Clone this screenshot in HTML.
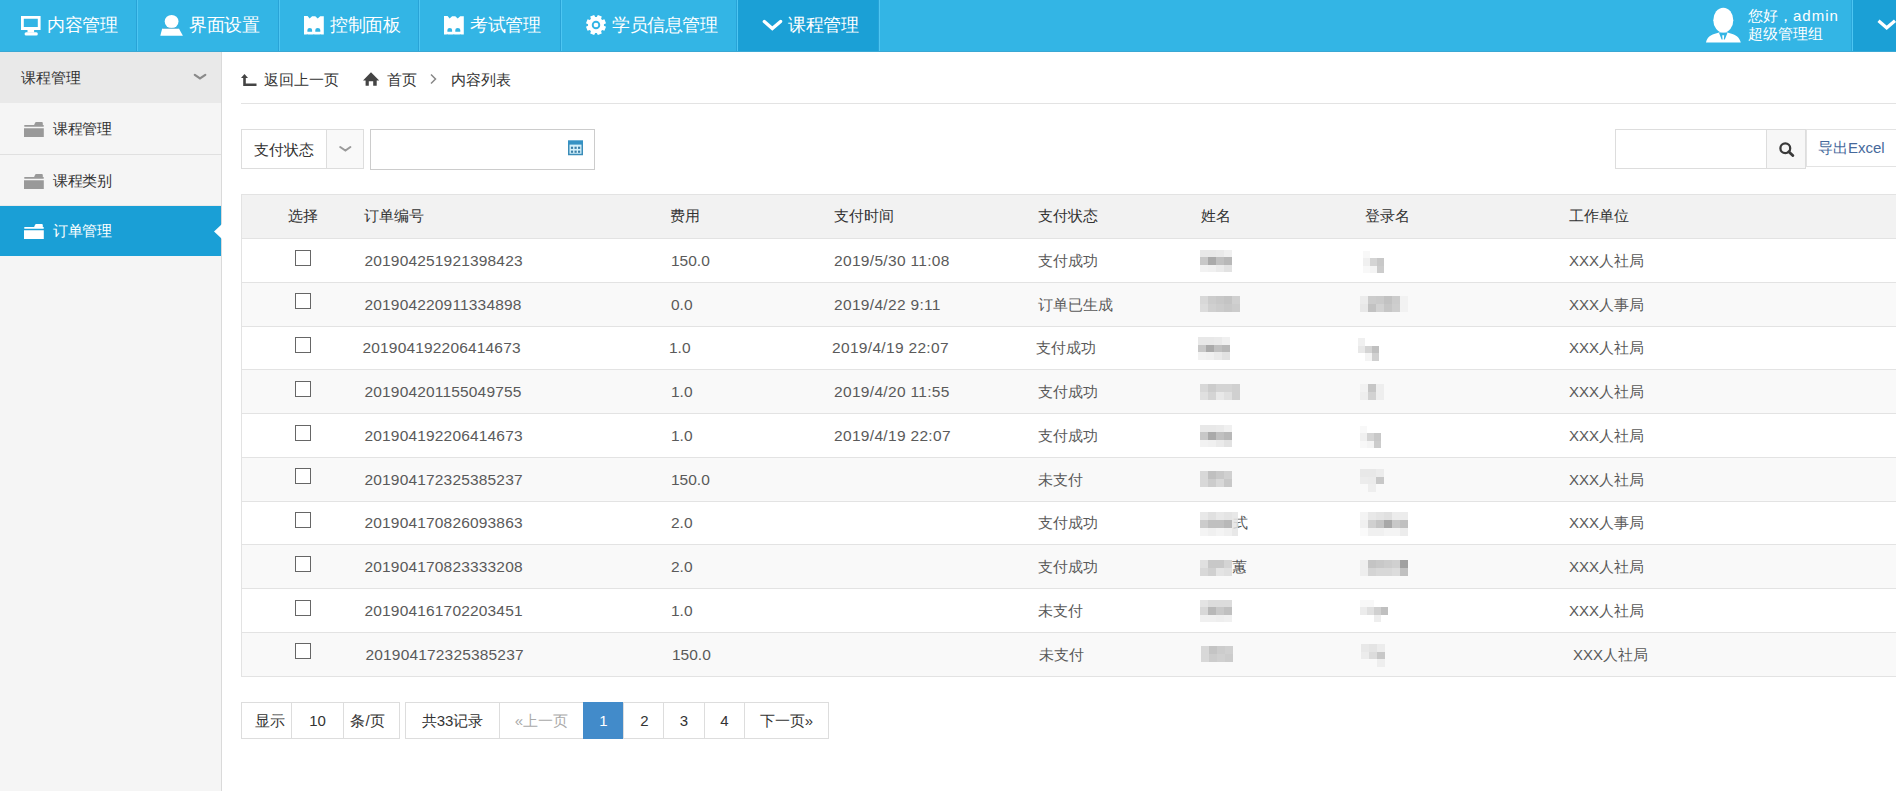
<!DOCTYPE html>
<html><head><meta charset="utf-8">
<style>
*{margin:0;padding:0;box-sizing:border-box}
html,body{width:1896px;height:791px;overflow:hidden;background:#fff;font-family:"Liberation Sans",sans-serif;color:#333}
.abs{position:absolute}
#hdr{position:absolute;left:0;top:0;width:1896px;height:52px;background:#33b5e5}
.tab{position:absolute;top:0;height:52px;color:#fff;font-size:18px;line-height:52px;white-space:nowrap}
.tab .t{position:absolute;top:-1px;letter-spacing:-0.4px}
.tab svg{position:absolute}
.div{position:absolute;top:0;width:1px;height:52px;background:#29a3d7}
.divl{position:absolute;top:0;width:1px;height:52px;background:#4ec6f2}
#side{position:absolute;left:0;top:52px;width:222px;height:739px;background:#f5f5f5;border-right:1px solid #dadada}
.sitem{position:absolute;left:0;width:221px;font-size:15px;color:#333}
.sitem .t{position:absolute;left:53px;letter-spacing:-0.5px}
.line{position:absolute;background:#e3e3e3}
.crumb{position:absolute;font-size:15px;color:#333;white-space:nowrap}
table{border-collapse:collapse}
.cell{position:absolute;font-size:15px;color:#5a5a5a;white-space:nowrap}
.hcell{position:absolute;font-size:15px;color:#333;white-space:nowrap}
.cb{position:absolute;width:16px;height:16px;border:1px solid #666;background:#fff}
.pg{position:absolute;top:702px;height:37px;border:1px solid #ddd;background:#fff;font-size:15px;color:#333;line-height:35px;text-align:center;white-space:nowrap}
.mz{position:absolute}
.mz i{position:absolute;width:8px;height:8px}
</style></head>
<body>
<div id="hdr">
  <div class="abs" style="left:0;top:51px;width:1896px;height:1px;background:#3aa8d4;z-index:5"></div>
  <!-- tab 1 -->
  <div class="tab" style="left:0;width:137px">
    <svg style="left:21.3px;top:16.3px" width="21" height="21" viewBox="0 0 21 21"><path fill="#fff" fill-rule="evenodd" d="M0 0H19.6V13.9H0Z M2.8 2.8V11.1H16.8V2.8Z"/><rect x="6.5" y="13.5" width="6.6" height="3" fill="#fff"/><rect x="3.6" y="16.3" width="13.2" height="3.1" rx="1.5" fill="#fff"/></svg>
    <span class="t" style="left:47px">内容管理</span>
  </div>
  <div class="div" style="left:136px"></div><div class="divl" style="left:137px"></div>
  <div class="tab" style="left:138px;width:141px">
    <svg style="left:22px;top:14px" width="24" height="23" viewBox="0 0 24 23"><path fill="#fff" d="M2.2 14.6H18.9L22.9 21.7H0.3Z"/><ellipse cx="11.6" cy="7.5" rx="6.9" ry="6.6" fill="#fff"/><path d="M2.4 14.3H18.8" stroke="#5aa9c9" stroke-width="0.7"/></svg>
    <span class="t" style="left:51px">界面设置</span>
  </div>
  <div class="div" style="left:278px"></div><div class="divl" style="left:279px"></div>
  <div class="tab" style="left:280px;width:139px">
    <svg style="left:23.7px;top:16.1px" width="20" height="19" viewBox="0 0 20 19"><path fill="#fff" d="M0 0H3.6L5.6 2.6L8.1 0.3H11.3L13.7 2.6L16.2 0.3H19.8V18.6H17.5Q16.5 17.8 15.5 18.6H10.8Q9.8 17.8 8.8 18.6H4.2Q3.2 17.8 2.2 18.6H0Z"/><path fill="#33b5e5" d="M3.4 15.8V14Q3.4 11.9 5.7 11.9Q8.1 11.9 8.1 14V15.8Z M11.3 15.8V14Q11.3 11.9 13.7 11.9Q16.3 11.9 16.3 14V15.8Z"/></svg>
    <span class="t" style="left:50px">控制面板</span>
  </div>
  <div class="div" style="left:418px"></div><div class="divl" style="left:419px"></div>
  <div class="tab" style="left:420px;width:141px">
    <svg style="left:23.7px;top:16.1px" width="20" height="19" viewBox="0 0 20 19"><path fill="#fff" d="M0 0H3.6L5.6 2.6L8.1 0.3H11.3L13.7 2.6L16.2 0.3H19.8V18.6H17.5Q16.5 17.8 15.5 18.6H10.8Q9.8 17.8 8.8 18.6H4.2Q3.2 17.8 2.2 18.6H0Z"/><path fill="#33b5e5" d="M3.4 15.8V14Q3.4 11.9 5.7 11.9Q8.1 11.9 8.1 14V15.8Z M11.3 15.8V14Q11.3 11.9 13.7 11.9Q16.3 11.9 16.3 14V15.8Z"/></svg>
    <span class="t" style="left:50px">考试管理</span>
  </div>
  <div class="div" style="left:560px"></div><div class="divl" style="left:561px"></div>
  <div class="tab" style="left:562px;width:175px">
    <svg style="left:22.8px;top:14.4px" width="22" height="22" viewBox="-11 -11 22 22"><g fill="#fff"><path id="gear" d="M0.77 -7.96 L1.86 -10.03 L5.78 -8.41 L5.09 -6.17 L6.17 -5.09 L8.41 -5.78 L10.03 -1.86 L7.96 -0.77 L7.96 0.77 L10.03 1.86 L8.41 5.78 L6.17 5.09 L5.09 6.17 L5.78 8.41 L1.86 10.03 L0.77 7.96 L-0.77 7.96 L-1.86 10.03 L-5.78 8.41 L-5.09 6.17 L-6.17 5.09 L-8.41 5.78 L-10.03 1.86 L-7.96 0.77 L-7.96 -0.77 L-10.03 -1.86 L-8.41 -5.78 L-6.17 -5.09 L-5.09 -6.17 L-5.78 -8.41 L-1.86 -10.03 L-0.77 -7.96Z"/></g><circle r="3.3" fill="none" stroke="#33b5e5" stroke-width="1.9"/></svg>
    <span class="t" style="left:50px">学员信息管理</span>
  </div>
  <div class="div" style="left:736px"></div><div class="divl" style="left:737px"></div>
  <div class="tab" style="left:738px;width:141px;background:#1ba0d6">
    <svg style="left:24px;top:19px" width="21" height="13" viewBox="0 0 21 13"><path d="M2.3 2.6L10.3 9.6L18.6 2.4" stroke="#fff" stroke-width="3.3" stroke-linecap="round" fill="none"/></svg>
    <span class="t" style="left:50px">课程管理</span>
  </div>
  <div class="div" style="left:878px"></div><div class="divl" style="left:879px"></div>

  <!-- user -->
  <svg class="abs" style="left:1705px;top:7px" width="37" height="37" viewBox="0 0 37 37"><ellipse cx="18.3" cy="13.2" rx="10" ry="12.5" fill="#fff"/><path fill="#fff" d="M1 35.6C2 30.5 5 27.8 12.5 26L14 25.6H22.5L24 26C31.5 27.8 34.5 30.5 35.8 35.6Z"/><path fill="#33b5e5" d="M14 25.8L16.6 32.6H17.6L17.2 28.2H19.2L18.8 32.6H19.8L22.5 25.8Z"/></svg>
  <div class="abs" style="left:1748px;top:6.5px;font-size:15px;line-height:18px;color:#fff;white-space:nowrap">您好，<span style="letter-spacing:1px">admin</span><br>超级管理组</div>
  <div class="abs" style="left:1853px;top:0;width:43px;height:52px;background:#1ba0d6"></div>
  <div class="div" style="left:1851px;background:#2aa6da"></div><div class="divl" style="left:1852px"></div>
  <svg class="abs" style="left:1875px;top:17px" width="24" height="15" viewBox="0 0 24 15"><path d="M3.5 3.8L11.7 10.8L20 3.8" stroke="#fff" stroke-width="3.2" fill="none"/></svg>
</div>

<!-- sidebar -->
<div id="side"></div>
<div class="sitem" style="top:52px;height:51px;background:#e9e9e9">
  <span class="abs" style="left:21px;top:0;line-height:51px;font-size:15px">课程管理</span>
  <svg class="abs" style="left:193px;top:20px" width="14" height="9" viewBox="0 0 14 9"><path d="M1.8 2.8L7 6.4L12.3 2.8" stroke="#8a8a8a" stroke-width="2.2" stroke-linecap="round" fill="none"/></svg>
</div>
<div class="sitem" style="top:103px;height:52px;border-bottom:1px solid #e0e0e0">
  <svg class="abs" style="left:23.7px;top:19px" width="21" height="15" viewBox="0 0 21 15"><path fill="#999" d="M10 3.2L11.2 0.6Q11.5 0 12.2 0H17.8Q18.8 0 18.8 1V3.2Z M0.3 3H19.7V4.7H0.3Z M0 6.3H19.8V15H0Z"/></svg>
  <span class="t" style="top:0;line-height:51px">课程管理</span>
</div>
<div class="sitem" style="top:155px;height:51px;border-bottom:1px solid #eaeaea">
  <svg class="abs" style="left:23.7px;top:19px" width="21" height="15" viewBox="0 0 21 15"><path fill="#999" d="M10 3.2L11.2 0.6Q11.5 0 12.2 0H17.8Q18.8 0 18.8 1V3.2Z M0.3 3H19.7V4.7H0.3Z M0 6.3H19.8V15H0Z"/></svg>
  <span class="t" style="top:0;line-height:51px">课程类别</span>
</div>
<div class="sitem" style="top:206px;height:50px;background:#1a9fd6;color:#fff">
  <svg class="abs" style="left:23.7px;top:18px" width="21" height="15" viewBox="0 0 21 15"><path fill="#fff" d="M10 3.2L11.2 0.6Q11.5 0 12.2 0H17.8Q18.8 0 18.8 1V3.2Z M0.3 3H19.7V4.7H0.3Z M0 6.3H19.8V15H0Z"/></svg>
  <span class="t" style="top:0;line-height:50px">订单管理</span>
</div>
<svg class="abs" style="left:214px;top:223.5px" width="8" height="15" viewBox="0 0 8 15"><path d="M8 0L0 7.5L8 15Z" fill="#fff"/></svg>

<!-- breadcrumb -->
<svg class="abs" style="left:241px;top:74px" width="16" height="12" viewBox="0 0 16 12"><path fill="#444" d="M3.5 0L7 4H4.8V9.5H15.5V12H2.2V4H0Z"/></svg>
<div class="crumb" style="left:264px;top:70px;line-height:20px">返回上一页</div>
<svg class="abs" style="left:363px;top:72px" width="17" height="14" viewBox="0 0 17 14"><path fill="#444" d="M8 0.3L16.2 8.5H13.7V13.8H10.2V9.3H5.8V13.8H2.6V8.5H0Z"/></svg>
<div class="crumb" style="left:387px;top:70px;line-height:20px">首页</div>
<svg class="abs" style="left:429px;top:73px" width="9" height="12" viewBox="0 0 9 12"><path d="M2 1.5L6.5 6L2 10.5" stroke="#888" stroke-width="1.5" fill="none"/></svg>
<div class="crumb" style="left:451px;top:70px;line-height:20px">内容列表</div>
<div class="line" style="left:241px;top:103px;width:1655px;height:1px"></div>

<!-- filters -->
<div class="abs" style="left:241px;top:129px;width:123px;height:40px;border:1px solid #ddd;background:#fff"></div>
<div class="abs" style="left:326px;top:130px;width:37px;height:38px;border-left:1px solid #ddd;background:#f9f9f9"></div>
<div class="crumb" style="left:254px;top:140px;line-height:20px">支付状态</div>
<svg class="abs" style="left:338px;top:144px" width="14" height="9" viewBox="0 0 14 9"><path d="M2.2 3L7.4 6.6L12.4 3" stroke="#9a9a9a" stroke-width="2" stroke-linecap="round" fill="none"/></svg>
<div class="abs" style="left:370px;top:129px;width:225px;height:41px;border:1px solid #ccc;background:#fff"></div>
<svg class="abs" style="left:568px;top:140px" width="16" height="16" viewBox="0 0 16 16"><rect x="0.75" y="2" width="13.5" height="12.5" fill="#d4f0fa" stroke="#3a8cb8" stroke-width="1.5"/><rect x="0" y="0.3" width="15" height="4.3" fill="#3592c4"/><g fill="#3a7fa8"><rect x="2.9" y="6.7" width="2.2" height="2.2"/><rect x="6.5" y="6.7" width="2.2" height="2.2"/><rect x="10" y="6.7" width="2.2" height="2.2"/><rect x="2.9" y="10.6" width="2.2" height="2.2"/><rect x="6.5" y="10.6" width="2.2" height="2.2"/><rect x="10" y="10.6" width="2.2" height="2.2"/></g></svg>

<div class="abs" style="left:1615px;top:129px;width:152px;height:40px;border:1px solid #ddd;background:#fff"></div>
<div class="abs" style="left:1766px;top:129px;width:40px;height:40px;border:1px solid #ddd;background:#f7f7f7"></div>
<svg class="abs" style="left:1779px;top:142px" width="16" height="15" viewBox="0 0 16 15"><circle cx="6.3" cy="6.3" r="4.9" stroke="#3a3a3a" stroke-width="2.3" fill="none"/><path d="M9.8 9.8L13.8 13.6" stroke="#3a3a3a" stroke-width="2.8" stroke-linecap="round"/></svg>
<div class="abs" style="left:1806px;top:129px;width:95px;height:38px;border:1px solid #e3e3e3;background:#fff"></div>
<div class="crumb" style="left:1818px;top:138px;line-height:20px;color:#46699b">导出Excel</div>

<!-- table -->
<div class="abs" style="left:241px;top:194px;width:1655px;height:45px;background:#f2f2f2;border-top:1px solid #e3e3e3;border-left:1px solid #e3e3e3;border-bottom:1px solid #e3e3e3"></div>
<div class="hcell" style="left:288px;top:206px;line-height:20px">选择</div>
<div class="hcell" style="left:364px;top:206px;line-height:20px">订单编号</div>
<div class="hcell" style="left:670px;top:206px;line-height:20px">费用</div>
<div class="hcell" style="left:834px;top:206px;line-height:20px">支付时间</div>
<div class="hcell" style="left:1038px;top:206px;line-height:20px">支付状态</div>
<div class="hcell" style="left:1201px;top:206px;line-height:20px">姓名</div>
<div class="hcell" style="left:1365px;top:206px;line-height:20px">登录名</div>
<div class="hcell" style="left:1569px;top:206px;line-height:20px">工作单位</div>
<div class="abs" style="left:241px;top:239px;width:1655px;height:44px;background:#fff;border-left:1px solid #e3e3e3;border-bottom:1px solid #e3e3e3"></div>
<div class="cb" style="left:295px;top:249.50px"></div>
<div class="cell" style="left:364px;top:250.88px;line-height:20px;font-size:15.5px;letter-spacing:0.17px;margin-left:0.5px">201904251921398423</div>
<div class="cell" style="left:671px;top:250.88px;line-height:20px;font-size:15.5px">150.0</div>
<div class="cell" style="left:834px;top:250.88px;line-height:20px;font-size:15.5px;letter-spacing:0.32px">2019/5/30 11:08</div>
<div class="cell" style="left:1038px;top:250.88px;line-height:20px">支付成功</div>
<div class="cell" style="left:1569px;top:250.88px;line-height:20px">XXX人社局</div>
<div class="mz" style="left:1200px;top:249.50px"><i style="left:0px;top:0.0px;width:8px;height:7.5px;background:#e8e8e8"></i><i style="left:8px;top:0.0px;width:8px;height:7.5px;background:#e8e8e8"></i><i style="left:16px;top:0.0px;width:8px;height:7.5px;background:#eaeaea"></i><i style="left:24px;top:0.0px;width:8px;height:7.5px;background:#f0f0f0"></i><i style="left:0px;top:7.5px;width:8px;height:7.5px;background:#c8c8c8"></i><i style="left:8px;top:7.5px;width:8px;height:7.5px;background:#aaaaaa"></i><i style="left:16px;top:7.5px;width:8px;height:7.5px;background:#c0c0c0"></i><i style="left:24px;top:7.5px;width:8px;height:7.5px;background:#b8b8b8"></i><i style="left:0px;top:15.0px;width:8px;height:7.5px;background:#f2f2f2"></i><i style="left:8px;top:15.0px;width:8px;height:7.5px;background:#f0f0f0"></i><i style="left:16px;top:15.0px;width:8px;height:7.5px;background:#eaeaea"></i><i style="left:24px;top:15.0px;width:8px;height:7.5px;background:#e2e2e2"></i></div>
<div class="mz" style="left:1363px;top:250.50px"><i style="left:0px;top:0.0px;width:7px;height:7.5px;background:#f8f8f8"></i><i style="left:0px;top:7.5px;width:7px;height:7.5px;background:#f0f0f0"></i><i style="left:7px;top:7.5px;width:7px;height:7.5px;background:#d4d4d4"></i><i style="left:14px;top:7.5px;width:7px;height:7.5px;background:#c8c8c8"></i><i style="left:0px;top:15.0px;width:7px;height:7.5px;background:#f8f8f8"></i><i style="left:7px;top:15.0px;width:7px;height:7.5px;background:#f4f4f4"></i><i style="left:14px;top:15.0px;width:7px;height:7.5px;background:#cccccc"></i></div>
<div class="abs" style="left:241px;top:283px;width:1655px;height:44px;background:#f9f9f9;border-left:1px solid #e3e3e3;border-bottom:1px solid #e3e3e3"></div>
<div class="cb" style="left:295px;top:293.25px"></div>
<div class="cell" style="left:364px;top:294.62px;line-height:20px;font-size:15.5px;letter-spacing:0.17px;margin-left:0.5px">201904220911334898</div>
<div class="cell" style="left:671px;top:294.62px;line-height:20px;font-size:15.5px">0.0</div>
<div class="cell" style="left:834px;top:294.62px;line-height:20px;font-size:15.5px;letter-spacing:0.32px">2019/4/22 9:11</div>
<div class="cell" style="left:1038px;top:294.62px;line-height:20px">订单已生成</div>
<div class="cell" style="left:1569px;top:294.62px;line-height:20px">XXX人事局</div>
<div class="mz" style="left:1200px;top:296.25px"><i style="left:0px;top:0px;width:8px;height:8px;background:#d8d8d8"></i><i style="left:8px;top:0px;width:8px;height:8px;background:#cccccc"></i><i style="left:16px;top:0px;width:8px;height:8px;background:#c8c8c8"></i><i style="left:24px;top:0px;width:8px;height:8px;background:#c4c4c4"></i><i style="left:32px;top:0px;width:8px;height:8px;background:#d0d0d0"></i><i style="left:0px;top:8px;width:8px;height:8px;background:#dcdcdc"></i><i style="left:8px;top:8px;width:8px;height:8px;background:#d0d0d0"></i><i style="left:16px;top:8px;width:8px;height:8px;background:#cccccc"></i><i style="left:24px;top:8px;width:8px;height:8px;background:#c8c8c8"></i><i style="left:32px;top:8px;width:8px;height:8px;background:#cccccc"></i></div>
<div class="mz" style="left:1360px;top:296.25px"><i style="left:0px;top:0px;width:8px;height:8px;background:#ececec"></i><i style="left:8px;top:0px;width:8px;height:8px;background:#cccccc"></i><i style="left:16px;top:0px;width:8px;height:8px;background:#cacaca"></i><i style="left:24px;top:0px;width:8px;height:8px;background:#c2c2c2"></i><i style="left:32px;top:0px;width:8px;height:8px;background:#cccccc"></i><i style="left:40px;top:0px;width:8px;height:8px;background:#f2f2f2"></i><i style="left:0px;top:8px;width:8px;height:8px;background:#e8e8e8"></i><i style="left:8px;top:8px;width:8px;height:8px;background:#c2c2c2"></i><i style="left:16px;top:8px;width:8px;height:8px;background:#d2d2d2"></i><i style="left:24px;top:8px;width:8px;height:8px;background:#c6c6c6"></i><i style="left:32px;top:8px;width:8px;height:8px;background:#cecece"></i><i style="left:40px;top:8px;width:8px;height:8px;background:#f2f2f2"></i></div>
<div class="abs" style="left:241px;top:327px;width:1655px;height:43px;background:#fff;border-left:1px solid #e3e3e3;border-bottom:1px solid #e3e3e3"></div>
<div class="cb" style="left:295px;top:337.00px"></div>
<div class="cell" style="left:362px;top:338.38px;line-height:20px;font-size:15.5px;letter-spacing:0.17px;margin-left:0.5px">201904192206414673</div>
<div class="cell" style="left:669px;top:338.38px;line-height:20px;font-size:15.5px">1.0</div>
<div class="cell" style="left:832px;top:338.38px;line-height:20px;font-size:15.5px;letter-spacing:0.32px">2019/4/19 22:07</div>
<div class="cell" style="left:1036px;top:338.38px;line-height:20px">支付成功</div>
<div class="cell" style="left:1569px;top:338.38px;line-height:20px">XXX人社局</div>
<div class="mz" style="left:1198px;top:337.00px"><i style="left:0px;top:0.0px;width:8px;height:7.5px;background:#e8e8e8"></i><i style="left:8px;top:0.0px;width:8px;height:7.5px;background:#e8e8e8"></i><i style="left:16px;top:0.0px;width:8px;height:7.5px;background:#eaeaea"></i><i style="left:24px;top:0.0px;width:8px;height:7.5px;background:#f0f0f0"></i><i style="left:0px;top:7.5px;width:8px;height:7.5px;background:#c8c8c8"></i><i style="left:8px;top:7.5px;width:8px;height:7.5px;background:#aaaaaa"></i><i style="left:16px;top:7.5px;width:8px;height:7.5px;background:#c0c0c0"></i><i style="left:24px;top:7.5px;width:8px;height:7.5px;background:#b8b8b8"></i><i style="left:0px;top:15.0px;width:8px;height:7.5px;background:#f2f2f2"></i><i style="left:8px;top:15.0px;width:8px;height:7.5px;background:#f0f0f0"></i><i style="left:16px;top:15.0px;width:8px;height:7.5px;background:#eaeaea"></i><i style="left:24px;top:15.0px;width:8px;height:7.5px;background:#e2e2e2"></i></div>
<div class="mz" style="left:1358px;top:338.00px"><i style="left:0px;top:0.0px;width:7px;height:7.5px;background:#f0f0f0"></i><i style="left:0px;top:7.5px;width:7px;height:7.5px;background:#e8e8e8"></i><i style="left:7px;top:7.5px;width:7px;height:7.5px;background:#d4d4d4"></i><i style="left:14px;top:7.5px;width:7px;height:7.5px;background:#c0c0c0"></i><i style="left:7px;top:15.0px;width:7px;height:7.5px;background:#f4f4f4"></i><i style="left:14px;top:15.0px;width:7px;height:7.5px;background:#d0d0d0"></i></div>
<div class="abs" style="left:241px;top:370px;width:1655px;height:44px;background:#f9f9f9;border-left:1px solid #e3e3e3;border-bottom:1px solid #e3e3e3"></div>
<div class="cb" style="left:295px;top:380.75px"></div>
<div class="cell" style="left:364px;top:382.12px;line-height:20px;font-size:15.5px;letter-spacing:0.17px;margin-left:0.5px">201904201155049755</div>
<div class="cell" style="left:671px;top:382.12px;line-height:20px;font-size:15.5px">1.0</div>
<div class="cell" style="left:834px;top:382.12px;line-height:20px;font-size:15.5px;letter-spacing:0.32px">2019/4/20 11:55</div>
<div class="cell" style="left:1038px;top:382.12px;line-height:20px">支付成功</div>
<div class="cell" style="left:1569px;top:382.12px;line-height:20px">XXX人社局</div>
<div class="mz" style="left:1200px;top:383.75px"><i style="left:0px;top:0px;width:8px;height:8px;background:#d8d8d8"></i><i style="left:8px;top:0px;width:8px;height:8px;background:#cccccc"></i><i style="left:16px;top:0px;width:8px;height:8px;background:#d4d4d4"></i><i style="left:24px;top:0px;width:8px;height:8px;background:#d4d4d4"></i><i style="left:32px;top:0px;width:8px;height:8px;background:#d0d0d0"></i><i style="left:0px;top:8px;width:8px;height:8px;background:#e0e0e0"></i><i style="left:8px;top:8px;width:8px;height:8px;background:#d4d4d4"></i><i style="left:16px;top:8px;width:8px;height:8px;background:#e8e8e8"></i><i style="left:24px;top:8px;width:8px;height:8px;background:#e0e0e0"></i><i style="left:32px;top:8px;width:8px;height:8px;background:#d0d0d0"></i></div>
<div class="mz" style="left:1360px;top:383.75px"><i style="left:0px;top:0px;width:8px;height:8px;background:#f2f2f2"></i><i style="left:8px;top:0px;width:8px;height:8px;background:#c6c6c6"></i><i style="left:16px;top:0px;width:8px;height:8px;background:#eeeeee"></i><i style="left:0px;top:8px;width:8px;height:8px;background:#eeeeee"></i><i style="left:8px;top:8px;width:8px;height:8px;background:#d2d2d2"></i><i style="left:16px;top:8px;width:8px;height:8px;background:#eeeeee"></i></div>
<div class="abs" style="left:241px;top:414px;width:1655px;height:44px;background:#fff;border-left:1px solid #e3e3e3;border-bottom:1px solid #e3e3e3"></div>
<div class="cb" style="left:295px;top:424.50px"></div>
<div class="cell" style="left:364px;top:425.88px;line-height:20px;font-size:15.5px;letter-spacing:0.17px;margin-left:0.5px">201904192206414673</div>
<div class="cell" style="left:671px;top:425.88px;line-height:20px;font-size:15.5px">1.0</div>
<div class="cell" style="left:834px;top:425.88px;line-height:20px;font-size:15.5px;letter-spacing:0.32px">2019/4/19 22:07</div>
<div class="cell" style="left:1038px;top:425.88px;line-height:20px">支付成功</div>
<div class="cell" style="left:1569px;top:425.88px;line-height:20px">XXX人社局</div>
<div class="mz" style="left:1200px;top:424.50px"><i style="left:0px;top:0.0px;width:8px;height:7.5px;background:#e8e8e8"></i><i style="left:8px;top:0.0px;width:8px;height:7.5px;background:#e8e8e8"></i><i style="left:16px;top:0.0px;width:8px;height:7.5px;background:#eaeaea"></i><i style="left:24px;top:0.0px;width:8px;height:7.5px;background:#f0f0f0"></i><i style="left:0px;top:7.5px;width:8px;height:7.5px;background:#c8c8c8"></i><i style="left:8px;top:7.5px;width:8px;height:7.5px;background:#aaaaaa"></i><i style="left:16px;top:7.5px;width:8px;height:7.5px;background:#c0c0c0"></i><i style="left:24px;top:7.5px;width:8px;height:7.5px;background:#b8b8b8"></i><i style="left:0px;top:15.0px;width:8px;height:7.5px;background:#f2f2f2"></i><i style="left:8px;top:15.0px;width:8px;height:7.5px;background:#f0f0f0"></i><i style="left:16px;top:15.0px;width:8px;height:7.5px;background:#eaeaea"></i><i style="left:24px;top:15.0px;width:8px;height:7.5px;background:#e2e2e2"></i></div>
<div class="mz" style="left:1360px;top:425.50px"><i style="left:0px;top:0.0px;width:7px;height:7.5px;background:#f8f8f8"></i><i style="left:0px;top:7.5px;width:7px;height:7.5px;background:#f0f0f0"></i><i style="left:7px;top:7.5px;width:7px;height:7.5px;background:#d4d4d4"></i><i style="left:14px;top:7.5px;width:7px;height:7.5px;background:#c8c8c8"></i><i style="left:0px;top:15.0px;width:7px;height:7.5px;background:#f8f8f8"></i><i style="left:7px;top:15.0px;width:7px;height:7.5px;background:#f4f4f4"></i><i style="left:14px;top:15.0px;width:7px;height:7.5px;background:#cccccc"></i></div>
<div class="abs" style="left:241px;top:458px;width:1655px;height:44px;background:#f9f9f9;border-left:1px solid #e3e3e3;border-bottom:1px solid #e3e3e3"></div>
<div class="cb" style="left:295px;top:468.25px"></div>
<div class="cell" style="left:364px;top:469.62px;line-height:20px;font-size:15.5px;letter-spacing:0.17px;margin-left:0.5px">201904172325385237</div>
<div class="cell" style="left:671px;top:469.62px;line-height:20px;font-size:15.5px">150.0</div>
<div class="cell" style="left:1038px;top:469.62px;line-height:20px">未支付</div>
<div class="cell" style="left:1569px;top:469.62px;line-height:20px">XXX人社局</div>
<div class="mz" style="left:1200px;top:471.25px"><i style="left:0px;top:0px;width:8px;height:8px;background:#d8d8d8"></i><i style="left:8px;top:0px;width:8px;height:8px;background:#c0c0c0"></i><i style="left:16px;top:0px;width:8px;height:8px;background:#c8c8c8"></i><i style="left:24px;top:0px;width:8px;height:8px;background:#d0d0d0"></i><i style="left:0px;top:8px;width:8px;height:8px;background:#d8d8d8"></i><i style="left:8px;top:8px;width:8px;height:8px;background:#cccccc"></i><i style="left:16px;top:8px;width:8px;height:8px;background:#d8d8d8"></i><i style="left:24px;top:8px;width:8px;height:8px;background:#c8c8c8"></i></div>
<div class="mz" style="left:1360px;top:469.25px"><i style="left:0px;top:0.0px;width:8px;height:7.5px;background:#e8e8e8"></i><i style="left:8px;top:0.0px;width:8px;height:7.5px;background:#e8e8e8"></i><i style="left:16px;top:0.0px;width:8px;height:7.5px;background:#ececec"></i><i style="left:0px;top:7.5px;width:8px;height:7.5px;background:#ececec"></i><i style="left:8px;top:7.5px;width:8px;height:7.5px;background:#ebebeb"></i><i style="left:16px;top:7.5px;width:8px;height:7.5px;background:#c8c8c8"></i><i style="left:8px;top:15.0px;width:8px;height:7.5px;background:#eeeeee"></i></div>
<div class="abs" style="left:241px;top:502px;width:1655px;height:43px;background:#fff;border-left:1px solid #e3e3e3;border-bottom:1px solid #e3e3e3"></div>
<div class="cb" style="left:295px;top:512.00px"></div>
<div class="cell" style="left:364px;top:513.38px;line-height:20px;font-size:15.5px;letter-spacing:0.17px;margin-left:0.5px">201904170826093863</div>
<div class="cell" style="left:671px;top:513.38px;line-height:20px;font-size:15.5px">2.0</div>
<div class="cell" style="left:1038px;top:513.38px;line-height:20px">支付成功</div>
<div class="cell" style="left:1569px;top:513.38px;line-height:20px">XXX人事局</div>
<div class="mz" style="left:1200px;top:512.00px"><i style="left:0px;top:0px;width:8px;height:8px;background:#e8e8e8"></i><i style="left:8px;top:0px;width:8px;height:8px;background:#e0e0e0"></i><i style="left:16px;top:0px;width:8px;height:8px;background:#e8e8e8"></i><i style="left:24px;top:0px;width:8px;height:8px;background:#e4e4e4"></i><i style="left:0px;top:8px;width:8px;height:8px;background:#cccccc"></i><i style="left:8px;top:8px;width:8px;height:8px;background:#c0c0c0"></i><i style="left:16px;top:8px;width:8px;height:8px;background:#c0c0c0"></i><i style="left:24px;top:8px;width:8px;height:8px;background:#b8b8b8"></i><i style="left:0px;top:16px;width:8px;height:8px;background:#f4f4f4"></i><i style="left:8px;top:16px;width:8px;height:8px;background:#f0f0f0"></i><i style="left:16px;top:16px;width:8px;height:8px;background:#f4f4f4"></i><i style="left:24px;top:16px;width:8px;height:8px;background:#f0f0f0"></i></div>
<div class="mz" style="left:1360px;top:512.00px"><i style="left:0px;top:0px;width:8px;height:8px;background:#f4f4f4"></i><i style="left:8px;top:0px;width:8px;height:8px;background:#e8e8e8"></i><i style="left:16px;top:0px;width:8px;height:8px;background:#e4e4e4"></i><i style="left:24px;top:0px;width:8px;height:8px;background:#e0e0e0"></i><i style="left:32px;top:0px;width:8px;height:8px;background:#ececec"></i><i style="left:40px;top:0px;width:8px;height:8px;background:#ececec"></i><i style="left:0px;top:8px;width:8px;height:8px;background:#f0f0f0"></i><i style="left:8px;top:8px;width:8px;height:8px;background:#d0d0d0"></i><i style="left:16px;top:8px;width:8px;height:8px;background:#c4c4c4"></i><i style="left:24px;top:8px;width:8px;height:8px;background:#a8a8a8"></i><i style="left:32px;top:8px;width:8px;height:8px;background:#c8c8c8"></i><i style="left:40px;top:8px;width:8px;height:8px;background:#c0c0c0"></i><i style="left:0px;top:16px;width:8px;height:8px;background:#fafafa"></i><i style="left:8px;top:16px;width:8px;height:8px;background:#f0f0f0"></i><i style="left:16px;top:16px;width:8px;height:8px;background:#f0f0f0"></i><i style="left:24px;top:16px;width:8px;height:8px;background:#f4f4f4"></i><i style="left:32px;top:16px;width:8px;height:8px;background:#f4f4f4"></i><i style="left:40px;top:16px;width:8px;height:8px;background:#ececec"></i></div>
<div class="abs" style="left:241px;top:545px;width:1655px;height:44px;background:#f9f9f9;border-left:1px solid #e3e3e3;border-bottom:1px solid #e3e3e3"></div>
<div class="cb" style="left:295px;top:555.75px"></div>
<div class="cell" style="left:364px;top:557.12px;line-height:20px;font-size:15.5px;letter-spacing:0.17px;margin-left:0.5px">201904170823333208</div>
<div class="cell" style="left:671px;top:557.12px;line-height:20px;font-size:15.5px">2.0</div>
<div class="cell" style="left:1038px;top:557.12px;line-height:20px">支付成功</div>
<div class="cell" style="left:1569px;top:557.12px;line-height:20px">XXX人社局</div>
<div class="mz" style="left:1200px;top:560.05px"><i style="left:0px;top:0px;width:8px;height:8px;background:#e0e0e0"></i><i style="left:8px;top:0px;width:8px;height:8px;background:#c8c8c8"></i><i style="left:16px;top:0px;width:8px;height:8px;background:#c8c8c8"></i><i style="left:24px;top:0px;width:8px;height:8px;background:#d4d4d4"></i><i style="left:0px;top:8px;width:8px;height:8px;background:#d8d8d8"></i><i style="left:8px;top:8px;width:8px;height:8px;background:#d0d0d0"></i><i style="left:16px;top:8px;width:8px;height:8px;background:#e4e4e4"></i><i style="left:24px;top:8px;width:8px;height:8px;background:#e0e0e0"></i></div>
<div class="mz" style="left:1360px;top:560.05px"><i style="left:0px;top:0px;width:8px;height:8px;background:#eeeeee"></i><i style="left:8px;top:0px;width:8px;height:8px;background:#c4c4c4"></i><i style="left:16px;top:0px;width:8px;height:8px;background:#c8c8c8"></i><i style="left:24px;top:0px;width:8px;height:8px;background:#cccccc"></i><i style="left:32px;top:0px;width:8px;height:8px;background:#d0d0d0"></i><i style="left:40px;top:0px;width:8px;height:8px;background:#a0a0a0"></i><i style="left:0px;top:8px;width:8px;height:8px;background:#eeeeee"></i><i style="left:8px;top:8px;width:8px;height:8px;background:#d4d4d4"></i><i style="left:16px;top:8px;width:8px;height:8px;background:#d8d8d8"></i><i style="left:24px;top:8px;width:8px;height:8px;background:#d8d8d8"></i><i style="left:32px;top:8px;width:8px;height:8px;background:#dcdcdc"></i><i style="left:40px;top:8px;width:8px;height:8px;background:#c0c0c0"></i></div>
<div class="abs" style="left:241px;top:589px;width:1655px;height:44px;background:#fff;border-left:1px solid #e3e3e3;border-bottom:1px solid #e3e3e3"></div>
<div class="cb" style="left:295px;top:599.50px"></div>
<div class="cell" style="left:364px;top:600.88px;line-height:20px;font-size:15.5px;letter-spacing:0.17px;margin-left:0.5px">201904161702203451</div>
<div class="cell" style="left:671px;top:600.88px;line-height:20px;font-size:15.5px">1.0</div>
<div class="cell" style="left:1038px;top:600.88px;line-height:20px">未支付</div>
<div class="cell" style="left:1569px;top:600.88px;line-height:20px">XXX人社局</div>
<div class="mz" style="left:1200px;top:599.50px"><i style="left:0px;top:0.0px;width:8px;height:7.5px;background:#e4e4e4"></i><i style="left:8px;top:0.0px;width:8px;height:7.5px;background:#dcdcdc"></i><i style="left:16px;top:0.0px;width:8px;height:7.5px;background:#dcdcdc"></i><i style="left:24px;top:0.0px;width:8px;height:7.5px;background:#dcdcdc"></i><i style="left:0px;top:7.5px;width:8px;height:7.5px;background:#d8d8d8"></i><i style="left:8px;top:7.5px;width:8px;height:7.5px;background:#b8b8b8"></i><i style="left:16px;top:7.5px;width:8px;height:7.5px;background:#c8c8c8"></i><i style="left:24px;top:7.5px;width:8px;height:7.5px;background:#c0c0c0"></i><i style="left:0px;top:15.0px;width:8px;height:7.5px;background:#f0f0f0"></i><i style="left:8px;top:15.0px;width:8px;height:7.5px;background:#f0f0f0"></i><i style="left:16px;top:15.0px;width:8px;height:7.5px;background:#eeeeee"></i><i style="left:24px;top:15.0px;width:8px;height:7.5px;background:#f0f0f0"></i></div>
<div class="mz" style="left:1360px;top:599.50px"><i style="left:0px;top:0.0px;width:7px;height:7.5px;background:#f8f8f8"></i><i style="left:7px;top:0.0px;width:7px;height:7.5px;background:#f8f8f8"></i><i style="left:0px;top:7.5px;width:7px;height:7.5px;background:#ececec"></i><i style="left:7px;top:7.5px;width:7px;height:7.5px;background:#e0e0e0"></i><i style="left:14px;top:7.5px;width:7px;height:7.5px;background:#d0d0d0"></i><i style="left:21px;top:7.5px;width:7px;height:7.5px;background:#c0c0c0"></i><i style="left:14px;top:15.0px;width:7px;height:7.5px;background:#eeeeee"></i></div>
<div class="abs" style="left:241px;top:633px;width:1655px;height:44px;background:#f9f9f9;border-left:1px solid #e3e3e3;border-bottom:1px solid #e3e3e3"></div>
<div class="cb" style="left:295px;top:643.25px"></div>
<div class="cell" style="left:365px;top:644.62px;line-height:20px;font-size:15.5px;letter-spacing:0.17px;margin-left:0.5px">201904172325385237</div>
<div class="cell" style="left:672px;top:644.62px;line-height:20px;font-size:15.5px">150.0</div>
<div class="cell" style="left:1039px;top:644.62px;line-height:20px">未支付</div>
<div class="cell" style="left:1573px;top:644.62px;line-height:20px">XXX人社局</div>
<div class="mz" style="left:1201px;top:646.25px"><i style="left:0px;top:0px;width:8px;height:8px;background:#d8d8d8"></i><i style="left:8px;top:0px;width:8px;height:8px;background:#c4c4c4"></i><i style="left:16px;top:0px;width:8px;height:8px;background:#cccccc"></i><i style="left:24px;top:0px;width:8px;height:8px;background:#d0d0d0"></i><i style="left:0px;top:8px;width:8px;height:8px;background:#d8d8d8"></i><i style="left:8px;top:8px;width:8px;height:8px;background:#cccccc"></i><i style="left:16px;top:8px;width:8px;height:8px;background:#d0d0d0"></i><i style="left:24px;top:8px;width:8px;height:8px;background:#cccccc"></i></div>
<div class="mz" style="left:1361px;top:644.25px"><i style="left:0px;top:0.0px;width:8px;height:7.5px;background:#e8e8e8"></i><i style="left:8px;top:0.0px;width:8px;height:7.5px;background:#e4e4e4"></i><i style="left:16px;top:0.0px;width:8px;height:7.5px;background:#ececec"></i><i style="left:0px;top:7.5px;width:8px;height:7.5px;background:#ececec"></i><i style="left:8px;top:7.5px;width:8px;height:7.5px;background:#dcdcdc"></i><i style="left:16px;top:7.5px;width:8px;height:7.5px;background:#c8c8c8"></i><i style="left:16px;top:15.0px;width:8px;height:7.5px;background:#eeeeee"></i></div>
<div class="cell" style="left:1233px;top:513.38px;line-height:20px;color:#555">式</div>
<div class="mz" style="left:1232px;top:512.00px"><i style="left:0;top:0;width:6px;height:24px;background:#e4e4e4;opacity:.85"></i></div>
<div class="cell" style="left:1232px;top:557.12px;line-height:20px;color:#555">蕙</div>
<!-- pagination -->
<div class="pg" style="left:241px;width:51px;padding-left:6px">显示</div>
<div class="pg" style="left:291px;width:53px">10</div>
<div class="pg" style="left:343px;width:57px;padding-right:8px">条/页</div>
<div class="pg" style="left:405px;width:95px">共33记录</div>
<div class="pg" style="left:499px;width:85px;color:#aaa">«上一页</div>
<div class="pg" style="left:583px;width:41px;background:#428bca;border-color:#428bca;color:#fff">1</div>
<div class="pg" style="left:623px;width:41px;padding-left:2px">2</div>
<div class="pg" style="left:663px;width:42px">3</div>
<div class="pg" style="left:704px;width:41px">4</div>
<div class="pg" style="left:744px;width:85px">下一页»</div>
</body></html>
